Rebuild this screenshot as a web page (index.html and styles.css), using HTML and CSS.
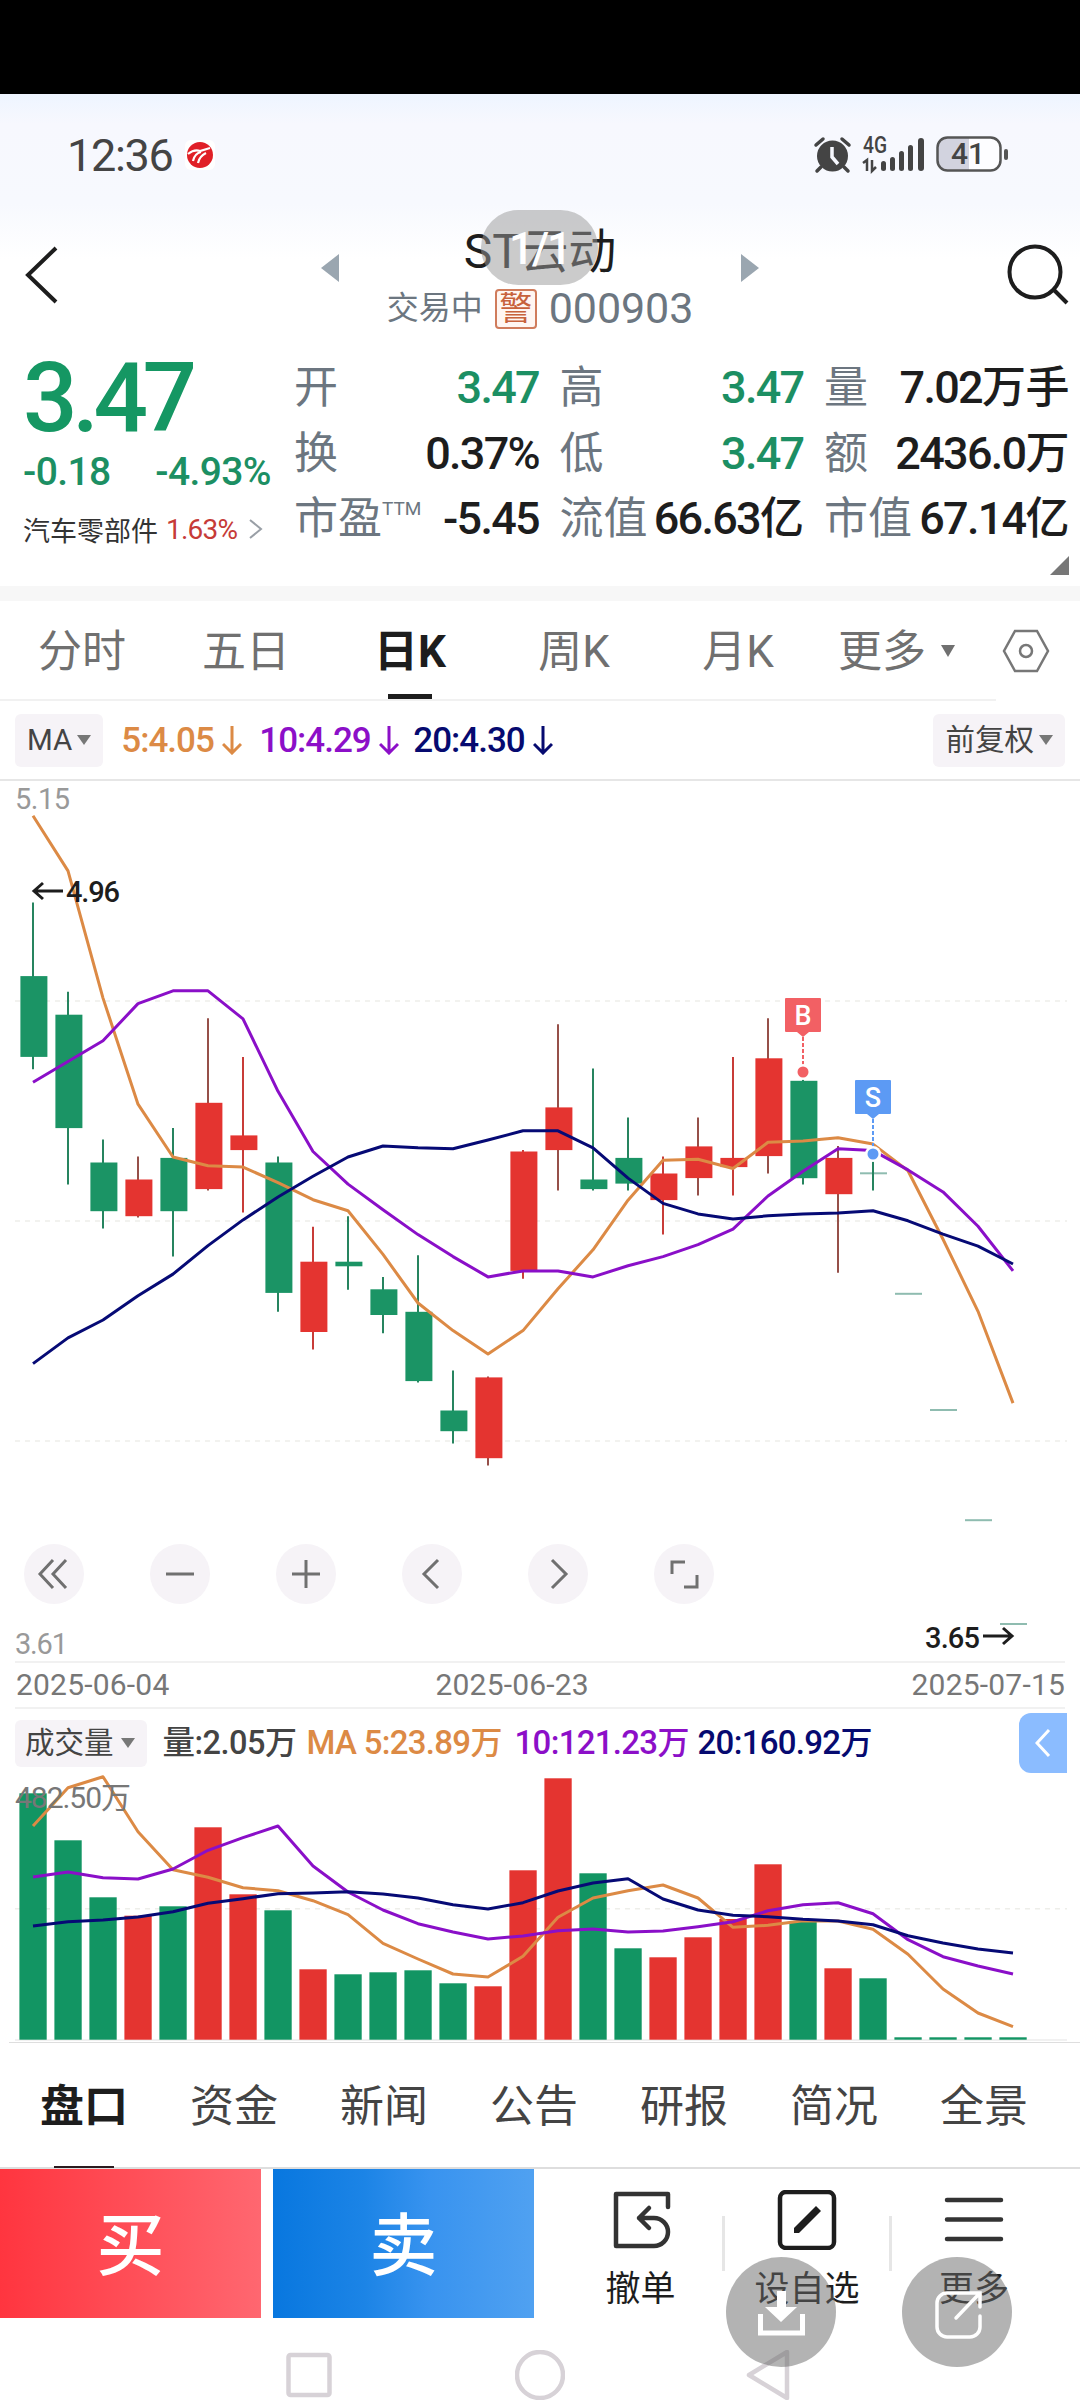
FILE: index.html
```html
<!DOCTYPE html>
<html lang="zh-CN">
<head>
<meta charset="utf-8">
<title>ST云动 000903</title>
<link rel="stylesheet" href="styles.css">
</head>
<body>
<div class="screen">
  <div class="cutout"></div>

  <div class="top">
    <div class="status">
      <span class="clock">12:36</span>
      <svg class="app-dot" width="30" height="30" viewBox="0 0 30 30"><rect width="30" height="30" rx="6" fill="#fff"/><circle cx="15" cy="15" r="13" fill="#e02027"/><path d="M3 14c5-4 9-4 12-3l10-3M8 21c1-5 4-8 8-9M13 23c1-5 4-8 8-10" fill="none" stroke="#fff" stroke-width="2.200"/></svg>
      <svg class="status-icons" width="200" height="44" viewBox="0 0 200 44">
        <g fill="none" stroke="#444" stroke-width="3.5" stroke-linecap="round"><path d="M7 13l7-6M33 7l7 6M12 35l-4 4M35 35l4 4"/></g>
        <circle cx="23.500" cy="24" r="15.500" fill="#444"/><path d="M23 15v10l6 7" fill="none" stroke="#f6f8fe" stroke-width="3.500"/>
        <text x="54" y="21" class="net" textLength="24" lengthAdjust="spacingAndGlyphs">4G</text>
        <path d="M54 31l4-3v11M63 28v11l4-4" fill="none" stroke="#444" stroke-width="2.500"/>
        <g fill="#444"><rect x="72" y="29" width="5" height="10" rx="2.500"/><rect x="81" y="25" width="5" height="14" rx="2.500"/><rect x="90" y="19" width="5" height="20" rx="2.500"/><rect x="99" y="13" width="5" height="26" rx="2.500"/><rect x="109" y="6" width="6" height="33" rx="3"/></g>
        <rect x="128.500" y="5.500" width="63" height="33" rx="10" fill="#fdfdff"/><path d="M160 5.500h-21a10.500 10.500 0 0 0-10.500 10.500v12a10.500 10.500 0 0 0 10.500 10.500h21z" fill="#d2d3df"/>
        <rect x="128.500" y="5.500" width="63" height="33" rx="10" fill="none" stroke="#555" stroke-width="2.500"/><rect x="195" y="17" width="4" height="11" rx="2" fill="#555"/>
        <text x="159" y="32" text-anchor="middle" class="batt">41</text>
      </svg>
    </div>

    <div class="header">
      <svg class="back" width="36" height="60" viewBox="0 0 36 60"><path d="M33 3L5 30l28 27" fill="none" stroke="#1d1d1d" stroke-width="4"/></svg>
      <svg class="prev" width="18" height="28" viewBox="0 0 18 28"><path d="M18 0v28L0 14z" fill="#9aa6b0"/></svg>
      <div class="title">
        <div class="name">ST云动</div>
        <div class="sub"><span>交易中</span><span class="warn">警</span><span class="code">000903</span></div>
      </div>
      <svg class="next" width="18" height="28" viewBox="0 0 18 28"><path d="M0 0v28l18-14z" fill="#9aa6b0"/></svg>
      <svg class="search" width="64" height="62" viewBox="0 0 64 62"><circle cx="29" cy="28" r="25.500" fill="none" stroke="#1d1d1d" stroke-width="4"/><path d="M47 45l14 14" stroke="#1d1d1d" stroke-width="4"/></svg>
      <div class="pager">1/1</div>
    </div>
  </div>

  <div class="quote">
    <div class="last">
      <div class="price">3.47</div>
      <div class="change"><span>-0.18</span><span>-4.93%</span></div>
      <div class="sector"><span>汽车零部件</span><b>1.63%</b><svg width="14" height="22" viewBox="0 0 14 22"><path d="M1 2l11 9-11 9" fill="none" stroke="#999fa6" stroke-width="2"/></svg></div>
    </div>
    <div class="stats">
      <div><label>开</label><em class="down">3.47</em></div>
      <div><label>高</label><em class="down">3.47</em></div>
      <div><label>量</label><em>7.02<i>万手</i></em></div>
      <div><label>换</label><em>0.37%</em></div>
      <div><label>低</label><em class="down">3.47</em></div>
      <div><label>额</label><em>2436.0<i>万</i></em></div>
      <div><label>市盈<sup>TTM</sup></label><em>-5.45</em></div>
      <div><label>流值</label><em>66.63<i>亿</i></em></div>
      <div><label>市值</label><em>67.14<i>亿</i></em></div>
    </div>
    <svg class="corner" width="19" height="19" viewBox="0 0 19 19"><path d="M19 0v19H0z" fill="#777"/></svg>
  </div>

  <div class="periods">
    <span>分时</span><span>五日</span><span class="on">日K</span><span>周K</span><span>月K</span>
    <span class="more">更多<svg width="14" height="12" viewBox="0 0 14 12"><path d="M0 0h14L7 12z" fill="#707070"/></svg></span>
    <svg class="hex" width="48" height="44" viewBox="0 0 48 44"><path d="M13 2h22l11 20-11 20H13L2 22z" fill="none" stroke="#777" stroke-width="2.500"/><circle cx="24" cy="22" r="6" fill="none" stroke="#777" stroke-width="2.500"/></svg>
  </div>

  <div class="ma-row">
    <div class="chip">MA<svg width="14" height="10" viewBox="0 0 14 10"><path d="M0 0h14L7 10z" fill="#777"/></svg></div>
    <div class="ma orange"><span>5:4.05</span><svg width="20" height="30" viewBox="0 0 20 30"><path d="M10 1v27M1 19l9 9 9-9"/></svg></div>
    <div class="ma purple"><span>10:4.29</span><svg width="20" height="30" viewBox="0 0 20 30"><path d="M10 1v27M1 19l9 9 9-9"/></svg></div>
    <div class="ma navy"><span>20:4.30</span><svg width="20" height="30" viewBox="0 0 20 30"><path d="M10 1v27M1 19l9 9 9-9"/></svg></div>
    <div class="chip right">前复权<svg width="14" height="10" viewBox="0 0 14 10"><path d="M0 0h14L7 10z" fill="#777"/></svg></div>
  </div>

  <div class="price-pane">
    <svg id="price" width="1080" height="880" viewBox="0 0 1080 880"></svg>
    <div class="controls">
      <svg viewBox="0 0 60 60"><path d="M29 16L16 30l13 14M42 16L29 30l13 14"/></svg>
      <svg viewBox="0 0 60 60"><path d="M16 30h28"/></svg>
      <svg viewBox="0 0 60 60"><path d="M16 30h28M30 16v28"/></svg>
      <svg viewBox="0 0 60 60"><path d="M36 16L22 30l14 14"/></svg>
      <svg viewBox="0 0 60 60"><path d="M24 16l14 14-14 14"/></svg>
      <svg viewBox="0 0 60 60"><path d="M31 18H18v12M30 43h13V31"/></svg>
    </div>
  </div>

  <div class="dates"><span>2025-06-04</span><span>2025-06-23</span><span>2025-07-15</span></div>

  <div class="vol-row">
    <div class="chip">成交量<svg width="14" height="10" viewBox="0 0 14 10"><path d="M0 0h14L7 10z" fill="#777"/></svg></div>
    <span class="v1">量:2.05<i>万</i></span><span class="v2 orange">MA 5:23.89<i>万</i></span><span class="v3 purple">10:121.23<i>万</i></span><span class="v4 navy">20:160.92<i>万</i></span>
    <div class="drawer"><svg width="16" height="30" viewBox="0 0 16 30"><path d="M14 2L2 15l12 13" fill="none" stroke="#fff" stroke-width="3"/></svg></div>
  </div>
  <svg id="volume" class="vol-pane" width="1080" height="270" viewBox="0 0 1080 270"></svg>

  <div class="tabs"><span class="on">盘口</span><span>资金</span><span>新闻</span><span>公告</span><span>研报</span><span>简况</span><span>全景</span></div>

  <div class="actions">
    <div class="buy">买</div>
    <div class="sell">卖</div>
    <div class="act">
      <svg width="60" height="60" viewBox="0 0 60 60"><path d="M57 17V4H5v52h38a14 14 0 0 0 0-28H28M38 18L28 28l10 10" fill="none" stroke="#333" stroke-width="4.500" stroke-linecap="round" stroke-linejoin="round"/></svg>
      <span>撤单</span>
    </div>
    <div class="act mid">
      <svg width="60" height="60" viewBox="0 0 60 60"><rect x="3" y="2" width="54" height="56" rx="6" fill="none" stroke="#1d1d1d" stroke-width="4.500"/><path d="M17 43v-5l22-22 5 5-22 22z" fill="#1d1d1d"/></svg>
      <span>设自选</span>
    </div>
    <div class="act last-act">
      <svg width="60" height="60" viewBox="0 0 60 60"><path d="M3 10h54M3 29.500h54M3 49h54" stroke="#333" stroke-width="4.500" stroke-linecap="round"/></svg>
      <span>更多</span>
    </div>
  </div>

  <div class="nav">
    <svg width="46" height="50" viewBox="0 0 46 50"><rect x="2.500" y="5" width="41" height="40" rx="2" /></svg>
    <svg width="50" height="50" viewBox="0 0 50 50"><circle cx="25" cy="25" r="23"/></svg>
    <svg width="46" height="50" viewBox="0 0 46 50"><path d="M41 2v46L3 25z" stroke-linejoin="round"/></svg>
  </div>

  <div class="fab save"><svg width="110" height="110" viewBox="0 0 110 110"><path d="M34.500 57v19h42V57" fill="none" stroke="#fff" stroke-width="5"/><path d="M51 34h9v16h11L55 65 39 50h12z" fill="#fff"/></svg></div>
  <div class="fab share"><svg width="110" height="110" viewBox="0 0 110 110"><path d="M63 36H45a10 10 0 0 0-10 10v24a10 10 0 0 0 10 10h23a10 10 0 0 0 10-10V59M61 36h17v14M54 61l22-23" fill="none" stroke="#fff" stroke-width="3.500" stroke-linecap="round"/></svg></div>
</div>
<script src="chart.js"></script>
</body>
</html>
```
FILE: styles.css
```css
* { box-sizing: border-box; }
body { margin: 0; background: #fff; font-family: Roboto, "Noto Sans CJK SC", sans-serif; color: #1d1d1d; }
svg { display: block; flex: none; }
i, em { font-style: normal; }
.screen { position: relative; width: 1080px; height: 2400px; overflow: hidden; background: #fff; white-space: nowrap; }
.orange { color: #dc8a45; }
.purple { color: #8c0fc8; }
.navy { color: #060a70; }

.cutout { height: 94px; background: #000; }
.top { height: 246px; background: linear-gradient(#eef5ff 0, #f7f8fe 30px, #f7f9fe 110px, #fff 165px); }
.status { display: flex; align-items: center; height: 122px; padding-left: 67px; }
.clock { width: 118px; font-size: 45px; letter-spacing: -1.300px; color: #444; }
.status-icons { margin: -2px 71px 0 auto; }
.net { font-size: 23px; font-weight: 500; fill: #444; }
.batt { font-size: 30px; font-weight: 500; fill: #444; }

.header { position: relative; display: flex; height: 124px; padding: 0 10px 0 23px; }
.back { margin-top: 29px; }
.prev { margin: 38px 0 0 262px; }
.title { display: flex; flex-direction: column; align-items: center; width: 402px; }
.name { height: 68px; line-height: 72px; font-size: 48px; letter-spacing: -.2px; }
.sub { display: flex; align-items: center; height: 48px; font-size: 32px; line-height: 44px; color: #6c7680; }
.warn { width: 42px; height: 40px; margin: 2px 12px 0 12px; border: 2px solid #d07c5c; border-radius: 4px; font-size: 33px; line-height: 35px; text-align: center; color: #c8623c; background: #fff6f2; }
.code { font-size: 43px; letter-spacing: -.1px; }
.next { margin-top: 38px; }
.search { margin: 28px 0 0 auto; }
.pager { position: absolute; left: 481px; top: -6px; width: 117px; height: 75px; border-radius: 38px; background: rgba(153,153,153,.51); color: #fff; font-size: 44px; font-weight: 500; letter-spacing: -2px; line-height: 78px; text-align: center; }

.quote { position: relative; display: flex; height: 261px; border-bottom: 15px solid #f7f7f7; }
.last { width: 294px; padding-left: 23px; }
.price { height: 100px; margin-top: 7px; line-height: 102px; font-size: 96px; font-weight: 500; letter-spacing: -5.400px; color: #159763; }
.change { display: flex; justify-content: space-between; width: 248px; height: 48px; margin-top: 1px; line-height: 48px; font-size: 39px; letter-spacing: -.6px; font-weight: 500; color: #1c8f63; }
.sector { display: flex; align-items: center; height: 42px; margin-top: 12px; font-size: 27px; color: #333; }
.sector b { margin: 0 12px 0 8px; font-size: 28px; font-weight: 400; letter-spacing: -.8px; color: #c63b38; }
.stats { display: grid; grid-template-columns: 245px 244px 245px; column-gap: 20.500px; grid-auto-rows: 65.500px; padding-top: 15px; }
.stats div { display: flex; justify-content: space-between; align-items: baseline; line-height: 66px; height: 66px; }
.stats label { font-size: 44px; color: #6c7680; line-height: 66px; }
.stats sup { font-size: 19px; position: relative; top: -3px; vertical-align: 16px; line-height: 0; }
.stats em { font-size: 45px; font-weight: 500; letter-spacing: -1.700px; line-height: 66px; }
.stats i { font-size: 44px; letter-spacing: -.5px; }
.stats .down { color: #1c8f63; }
.corner { position: absolute; left: 1050px; top: 216px; }

.periods { position: relative; display: flex; align-items: center; height: 100px; font-size: 44px; line-height: 60px; color: #707070; }
.periods::after { content: ""; position: absolute; left: 0; bottom: 0; width: 996px; height: 2px; background: #f1f1f1; }
.periods span { width: 164px; margin-top: 2px; text-align: center; position: relative; }
.periods .on { color: #1d1d1d; font-weight: 700; }
.periods .on::after { content: ""; position: absolute; left: 60px; bottom: -18px; width: 44px; height: 6px; background: #1d1d1d; }
.periods .more { display: flex; align-items: center; gap: 15px; width: 164px; margin-left: 18px; }
.more svg { margin-top: -3px; }

.ma-row { display: flex; align-items: center; height: 80px; padding: 0 15px; border-bottom: 2px solid #e6e6e6; }
.chip { display: flex; align-items: center; gap: 5px; height: 53px; padding: 0 12px; border-radius: 6px; background: #f6f3f7; font-size: 29.500px; line-height: 53px; color: #444; }
.ma { display: flex; align-items: center; gap: 8px; font-size: 35px; font-weight: 500; letter-spacing: -1px; }
.ma svg path { fill: none; stroke: currentColor; stroke-width: 3; }
.ma.orange { width: 138px; margin-left: 18px; }
.ma.purple { width: 154px; }
.chip.right { margin-left: auto; }

.price-pane { position: relative; height: 880px; }
.controls { position: absolute; left: 24px; top: 763px; display: flex; gap: 66px; }
.controls svg { width: 60px; height: 60px; border-radius: 50%; background: #f6f3f7; }
.controls path { fill: none; stroke: #707070; stroke-width: 3; }
.ax { font-size: 29px; fill: #999; }
.tag { font-size: 29px; font-weight: 500; fill: #1d1d1d; }
.mark { font-size: 27px; font-weight: 500; fill: #fff; }

.dates { display: flex; align-items: center; height: 48px; margin: 0 15px; border-top: 2px solid #f1f1f1; border-bottom: 2px solid #f1f1f1; font-size: 30px; line-height: 42px; color: #777; letter-spacing: .2px; }
.dates span { margin-left: 1px; }
.dates span:nth-child(2) { margin-left: 266px; }
.dates span:nth-child(3) { margin-left: auto; }
.vol-row { display: flex; align-items: center; height: 68px; padding: 0 13px 0 15px; font-size: 33px; line-height: 50px; font-weight: 500; letter-spacing: -.7px; }
.vol-row .chip { height: 47px; padding: 0 12px 0 10px; font-weight: 400; letter-spacing: 0; gap: 7px; line-height: 47px; }
.vol-row i { font-size: 32px; letter-spacing: 0; }
.vol-row .v1 { width: 144px; margin-left: 16px; font-size: 32.500px; letter-spacing: -.5px; color: #444; }
.v2 { width: 208px; }
.v3 { width: 183px; }
.drawer { display: flex; align-items: center; justify-content: center; width: 48px; height: 60px; margin-left: auto; border-radius: 12px 0 0 12px; background: #8bbcff; }
.vol-pane { margin-top: -4px; }

.tabs { display: flex; align-items: center; height: 126px; padding: 0 21px 0 9px; border-bottom: 2px solid #dedede; font-size: 44px; line-height: 60px; color: #444; position: relative; }
.tabs span { width: 150px; margin-top: 3px; text-align: center; }
.tabs .on { font-weight: 700; color: #1d1d1d; }
.tabs::after { content: ""; position: absolute; left: 54px; bottom: -1px; width: 60px; height: 2px; background: #2a1a1e; }

.actions { display: flex; height: 149px; }
.buy, .sell { width: 261px; line-height: 157px; text-align: center; font-size: 68px; font-weight: 500; color: #fff; }
.buy { background: linear-gradient(90deg, #ff353f, #ff6770); }
.sell { margin-left: 12px; background: linear-gradient(90deg, #0877df, #1c84e6 35%, #3893ef 60%, #50a1f1); }
.act { position: relative; display: flex; flex-direction: column; align-items: center; width: 166px; padding-top: 21px; font-size: 35px; color: #1d1d1d; }
.act:nth-child(3) { width: 190px; padding-left: 23px; }
.act.last-act { padding-left: 2px; }
.act.mid::before, .act.mid::after { content: ""; position: absolute; left: -2px; top: 47px; width: 3px; height: 55px; background: #e6e6e6; }
.act.mid::after { left: 165px; }
.act span { margin-top: 14px; line-height: 52px; }

.nav { display: flex; align-items: center; height: 82px; padding: 32px 0 0 286px; }
.nav svg { fill: none; stroke: #d7d2d7; stroke-width: 4.500; }
.nav svg:nth-child(2) { margin-left: 183px; }
.nav svg:nth-child(3) { margin-left: 181px; }
.fab { position: absolute; top: 2257px; width: 110px; height: 110px; border-radius: 50%; background: rgba(106,106,106,.51); }
.save { left: 726px; }
.share { left: 902px; }
```
FILE: chart.js
```js
const STEP = 35, X0 = 33;
const GREEN = '#1b9465', RED = '#e43430';

// [high, body top, body bottom, low, direction]; d = falling, r/b = rising
const candles = [
  [267,427,603,630,'d'],[461,511,758,881,'d'],[783,833,939,977,'d'],[820,870,950,953,'b'],
  [758,823,939,1038,'d'],[519,703,891,894,'b'],[603,774,806,942,'r'],[820,833,1117,1158,'d'],
  [973,1049,1202,1240,'r'],[950,1049,1059,1110,'d'],[1082,1109,1165,1205,'d'],[1035,1158,1309,1312,'d'],
  [1286,1373,1418,1445,'d'],[1299,1301,1477,1493,'b'],[806,809,1069,1086,'r'],[532,713,806,894,'b'],
  [628,870,891,894,'d'],[735,823,879,894,'d'],[820,857,915,990,'r'],[735,798,867,905,'b'],
  [603,823,843,905,'r'],[519,606,819,857,'b'],[651,655,867,881,'d'],[797,823,902,1073,'b'],
  [815,855,858,894,'d'],[1119,1117,1121,1119,'d'],[1372,1370,1374,1372,'d'],[1612,1610,1614,1612,'d'],[1838,1836,1840,1838,'d']
];
const priceMA = {
  '#dc8a45': [78,198,475,706,821,840,843,877,914,938,1033,1139,1199,1250,1199,1108,1023,915,828,826,846,789,786,779,793,851,1000,1157,1357],
  '#8a0fc8': [658,613,568,487,459,459,520,678,809,880,936,990,1038,1082,1069,1069,1082,1058,1038,1012,978,906,852,803,807,849,897,972,1069],
  '#060a75': [1271,1215,1176,1123,1076,1014,958,908,863,821,797,801,803,784,764,764,801,867,922,945,956,949,945,943,938,960,989,1015,1054]
};
const volumes = [160,301,472,527,499,262,463,511,688,703,697,691,730,739,391,115,400,625,652,592,537,373,545,685,715,892,892,892,892];
const volumeMA = {
  '#dc8a45': [258,143,110,275,389,412,443,452,482,524,610,657,702,711,649,532,474,452,435,474,562,556,542,543,568,643,747,819,860],
  '#8a0fc8': [411,396,413,417,387,331,293,258,378,456,510,551,576,597,588,572,567,576,573,560,545,512,494,488,521,599,650,678,702],
  '#060a75': [558,545,540,531,515,490,476,461,459,455,462,474,494,507,488,453,429,416,477,510,526,530,538,543,554,587,609,627,639]
};

const line = (ys, scale, off, color) =>
  `<polyline fill="none" stroke="${color}" stroke-width="3" stroke-linejoin="round" points="${ys.map((v, i) => `${X0 + STEP * i},${(v * scale + off).toFixed(1)}`).join(' ')}"/>`;
const dash = y => `<path d="M15 ${y}H1067" stroke="#eeeeea" stroke-width="1.5" stroke-dasharray="5 5"/>`;

// Price pane
const P = 0.4592, PO = -1;
let s = dash(220) + dash(440) + dash(660);
candles.forEach(([h, t, b, l, k], i) => {
  const x = X0 + STEP * i, y = v => (v * P + PO).toFixed(1);
  const wick = k === 'd' ? '#26845f' : k === 'b' ? '#965049' : '#c83c38';
  if (i > 23) s += `<path d="M${x - 13} ${y((t + b) / 2)}h27" stroke="#8fbcb0" stroke-width="2"/>`;
  if (h !== l) s += `<path d="M${x} ${y(h)}V${y(l)}" stroke="${wick}" stroke-width="2"/>`;
  if (i < 24) s += `<rect x="${x - 12.6}" y="${y(t)}" width="27" height="${((b - t) * P).toFixed(1)}" fill="${k === 'd' ? GREEN : RED}"/>`;
});
for (const c in priceMA) s += line(priceMA[c], P, PO, c);
s += '<text class="ax" x="15" y="28" textLength="55">5.15</text><text class="ax" x="15" y="873" textLength="53">3.61</text>';
s += '<path d="M34 110H63M43 102l-9 8 9 8" fill="none" stroke="#1d1d1d" stroke-width="3"/><text class="tag" x="66" y="121" textLength="54">4.96</text>';
s += '<text class="tag" x="925" y="867" textLength="55">3.65</text><path d="M983 855h29M1003 847l9 8-9 8" fill="none" stroke="#1d1d1d" stroke-width="3"/>';
const marker = (x, top, dot, color, label) =>
  `<path d="M${x} ${top + 39}V${dot}" stroke="${color}" stroke-width="2" stroke-dasharray="4 2"/>
   <circle cx="${x}" cy="${dot}" r="8" fill="#fff"/><circle cx="${x}" cy="${dot}" r="5.5" fill="${color}"/>
   <path d="M${x - 17} ${top}h34a1 1 0 0 1 1 1v32a1 1 0 0 1-1 1h-11l-6 5-6-5h-11a1 1 0 0 1-1-1v-32a1 1 0 0 1 1-1z" fill="${color}"/>
   <text class="mark" x="${x}" y="${top + 27}" text-anchor="middle">${label}</text>`;
s += marker(803, 217, 291, '#f26064', 'B') + marker(873, 299, 373, '#5c9af4', 'S');
document.getElementById('price').innerHTML = s;

// Volume pane
const V = 1 / 3, BASE = 266.7, VO = -33;
let v = dash(135.7) + '<path d="M15 267H1067" stroke="#f1f1f1" stroke-width="2"/>';
volumes.forEach((t, i) => {
  const y = t * V + VO;
  v += `<rect x="${19.4 + STEP * i}" y="${y.toFixed(1)}" width="27.3" height="${(BASE - y).toFixed(1)}" fill="${candles[i][4] === 'd' ? '#129563' : RED}"/>`;
});
for (const c in volumeMA) v += line(volumeMA[c], V, VO, c);
v += '<text x="15" y="35" font-size="30" fill="#777" textLength="116">482.50万</text>';
v += '<path d="M9 269.5H1080" stroke="#dedede"/>';
document.getElementById('volume').innerHTML = v;
```
